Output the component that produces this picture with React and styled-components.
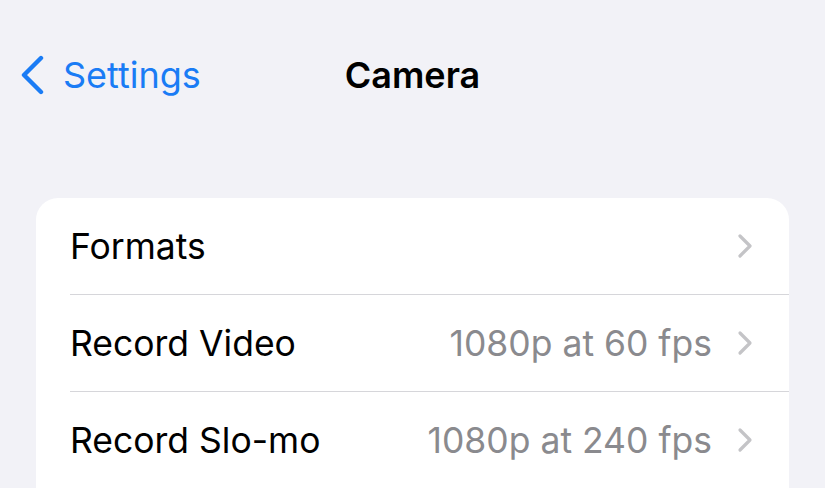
import React from "react";
import styled, { createGlobalStyle } from "styled-components";

const Global = createGlobalStyle`
  html, body { margin: 0; padding: 0; background: #f2f2f7; }
  body { font-family: Inter, "Noto Sans", sans-serif; -webkit-font-smoothing: antialiased; }
`;

const Screen = styled.div`
  width: 825px;
  height: 488px;
  overflow: hidden;
  background: #f2f2f7;
  display: flex;
  flex-direction: column;
`;

const NavBar = styled.div`
  position: relative;
  height: 150px;
  display: flex;
  align-items: flex-start;
  padding-top: 52px;
  box-sizing: border-box;
`;

const BackButton = styled.div`
  display: flex;
  align-items: center;
  gap: 18px;
  padding-left: 19px;
  color: #1a7cf5;
  font-size: 36px;
  height: 46px;
`;

const Title = styled.div`
  position: absolute;
  left: 0;
  right: 0;
  top: 52px;
  height: 46px;
  display: flex;
  align-items: center;
  justify-content: center;
  font-size: 36px;
  font-weight: 600;
  color: #000;
  pointer-events: none;
`;

const Card = styled.div`
  margin: 52px 36px 0 36px;
  background: #fff;
  border-radius: 22px 22px 0 0;
  flex: 1;
`;

const Row = styled.div`
  height: 96px;
  display: flex;
  align-items: center;
  margin-left: 34px;
  padding-right: 36px;
  border-bottom: ${(p) => (p.$last ? "none" : "1px solid #d6d6da")};
`;

const Label = styled.div`
  flex: 1;
  font-size: 35.5px;
  color: #000;
`;

const Value = styled.div`
  font-size: 35.5px;
  color: #8a8a8e;
  margin-right: 25px;
`;

const Chevron = () => (
  <svg width="16" height="26" viewBox="0 0 16 26" fill="none">
    <path d="M3 3 L13 13 L3 23" stroke="#c4c4c7" strokeWidth="3.2" strokeLinecap="round" strokeLinejoin="round" />
  </svg>
);

const BackChevron = () => (
  <svg width="26" height="40" viewBox="0 0 26 40" fill="none">
    <path d="M22 3 L5 20 L22 37" stroke="#1a7cf5" strokeWidth="4.4" strokeLinecap="round" strokeLinejoin="round" />
  </svg>
);

const rows = [
  { label: "Formats", value: "" },
  { label: "Record Video", value: "1080p at 60 fps" },
  { label: "Record Slo-mo", value: "1080p at 240 fps" },
];

export default function App() {
  return (
    <>
      <Global />
      <Screen>
        <NavBar>
          <BackButton>
            <BackChevron />
            <span>Settings</span>
          </BackButton>
          <Title>Camera</Title>
        </NavBar>
        <Card>
          {rows.map((r, i) => (
            <Row key={r.label} $last={i === rows.length - 1}>
              <Label>{r.label}</Label>
              {r.value && <Value>{r.value}</Value>}
              <Chevron />
            </Row>
          ))}
        </Card>
      </Screen>
    </>
  );
}
